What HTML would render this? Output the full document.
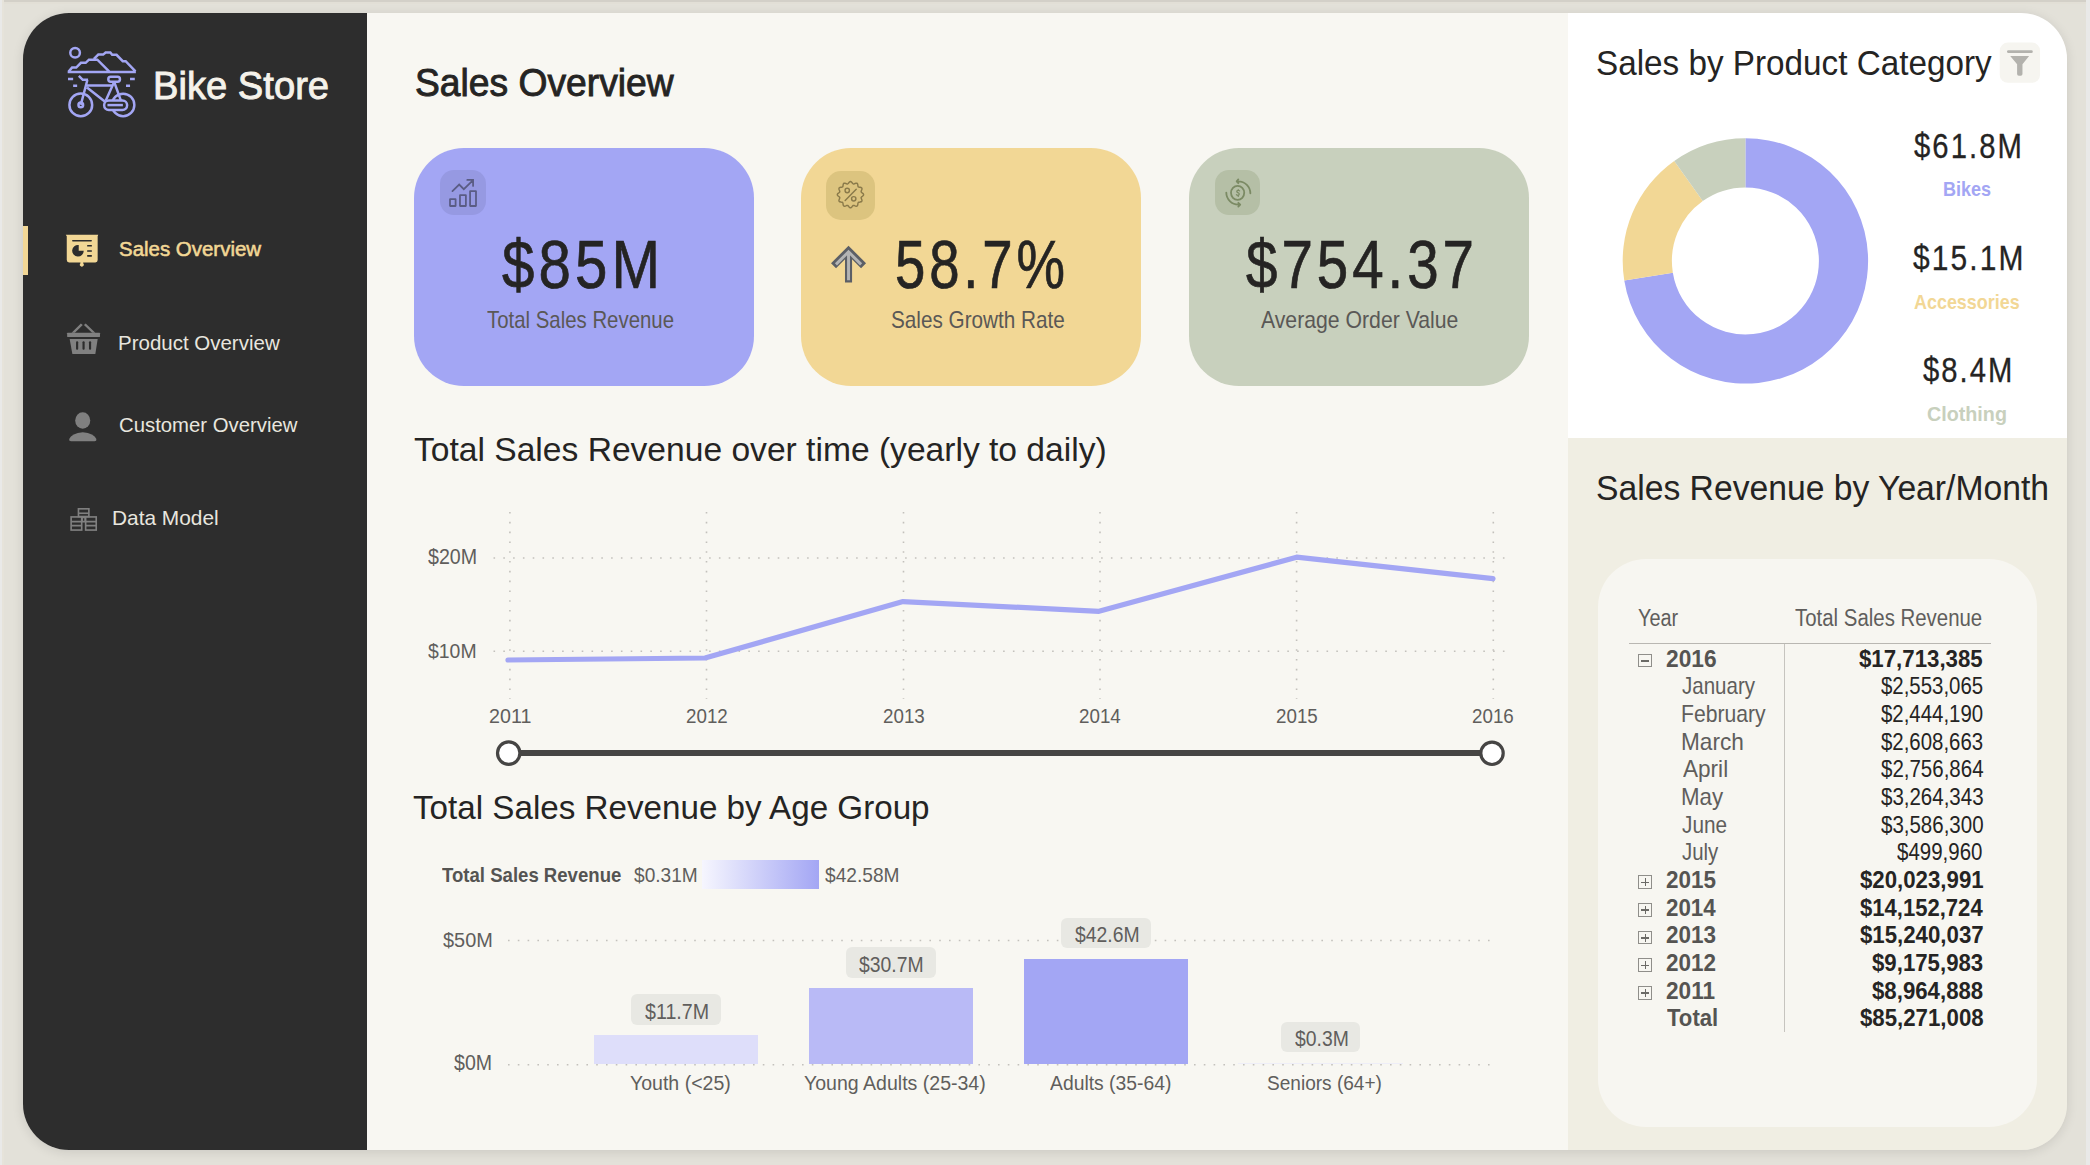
<!DOCTYPE html>
<html><head><meta charset="utf-8">
<style>
html,body{margin:0;padding:0}
body{width:2090px;height:1165px;overflow:hidden;position:relative;background:#e3e1d9;font-family:"Liberation Sans",sans-serif}
.a{position:absolute}
.t{position:absolute;white-space:nowrap;transform-origin:0 0;font-family:"Liberation Sans",sans-serif}
svg{position:absolute;overflow:visible}
</style></head><body>
<div class=a style="left:0;top:0;width:2090px;height:2px;background:#d3d0c8"></div><div class=a style="left:0;top:2px;width:2090px;height:2px;background:#e2dfd6"></div>
<div class=a style="left:0;top:0;width:2px;height:1165px;background:#e9e9e8"></div><div class=a style="left:2px;top:0;width:2px;height:1165px;background:#e6e3da"></div>
<div class=a style="left:2086px;top:0;width:4px;height:1165px;background:#e9e9e8"></div>
<!-- shadow container -->
<div class=a style="left:23px;top:13px;width:2044px;height:1137px;border-radius:46px;box-shadow:0 2px 12px rgba(0,0,0,0.11)"></div>
<!-- sidebar -->
<div class=a style="left:23px;top:13px;width:344px;height:1137px;background:#2d2d2d;border-radius:46px 0 0 46px"></div>
<!-- main -->
<div class=a style="left:367px;top:13px;width:1201px;height:1137px;background:#f8f7f2"></div>
<!-- right -->
<div class=a style="left:1568px;top:13px;width:499px;height:425px;background:#ffffff;border-radius:0 46px 0 0"></div>
<div class=a style="left:1568px;top:438px;width:499px;height:712px;background:#f0eee3;border-radius:0 0 46px 0"></div>
<div class=a style="left:1598px;top:559px;width:439px;height:568px;background:#f7f6f1;border-radius:48px"></div>

<!-- logo -->
<svg style="left:60px;top:40px" width="85" height="85" viewBox="0 0 1165 1165">
<g fill="none" stroke="#a3a6f4" stroke-width="34" stroke-linejoin="miter" stroke-linecap="butt">
<circle cx="207" cy="175" r="66"/>
<path d="M105,440 L1040,440 M118,432 L165,378 L222,378 L287,313 L352,313 L397,270 L512,270 L683,440 M465,258 L525,200 L592,200 L625,172 L690,172 L715,203 L775,203 L860,290 L900,290 L1035,430"/>
<path d="M110,535 L180,535 M180,628 L235,628 M960,535 L1025,535 M905,628 L960,628"/>
<circle cx="285" cy="890" r="156"/>
<circle cx="285" cy="890" r="32"/>
<circle cx="865" cy="890" r="154"/>
<path d="M258,492 L312,545 L385,545 M375,548 L285,890 M370,625 L725,625 M370,650 L618,845 M742,575 L628,830 M748,590 L835,830"/>
<rect x="662" y="505" width="160" height="66" rx="33"/>
<rect x="605" y="828" width="315" height="132" rx="64" fill="#2d2d2d"/>
<path d="M650,892 L862,892"/>
</g></svg>

<!-- nav active bar -->
<div class=a style="left:23px;top:226px;width:5px;height:49px;background:#f2d795"></div>
<!-- presentation icon -->
<svg style="left:60px;top:228px" width="45" height="45" viewBox="0 0 1165 1165">
<path fill="#f2d795" d="M150,175 L990,175 L975,215 L975,830 Q975,890 915,890 L600,890 L600,915 A50,50 0 1 1 530,915 L530,890 L235,890 Q175,890 175,830 L175,215 Z"/>
<g fill="#2d2d2d">
<rect x="312" y="310" width="515" height="42" rx="20"/>
<path d="M485,590 L615,590 A150,150 0 1 1 485,440 Z"/>
<rect x="703" y="438" width="122" height="42" rx="8"/>
<rect x="703" y="573" width="122" height="42" rx="8"/>
<rect x="703" y="700" width="122" height="42" rx="8"/>
</g></svg>
<!-- basket -->
<svg style="left:60px;top:318px" width="45" height="45" viewBox="0 0 1165 1165">
<g fill="#808080">
<path d="M300,385 L540,140 L590,180 L385,385 Z M665,140 L915,385 L830,385 L620,180 Z"/>
<rect x="185" y="385" width="850" height="105" rx="10"/>
<path d="M250,545 L975,545 L915,935 L320,935 Z"/>
</g>
<g fill="#2d2d2d"><rect x="415" y="600" width="56" height="225" rx="26"/><rect x="582" y="600" width="56" height="225" rx="26"/><rect x="750" y="600" width="56" height="225" rx="26"/></g>
</svg>
<!-- person -->
<svg style="left:60px;top:404px" width="45" height="45" viewBox="0 0 1165 1165">
<g fill="#808080">
<ellipse cx="588" cy="428" rx="195" ry="212"/>
<path d="M238,905 Q300,760 590,732 Q880,760 942,905 Q952,962 895,962 L285,962 Q228,962 238,905 Z"/>
</g></svg>
<!-- data model -->
<svg style="left:62px;top:497px" width="45" height="45" viewBox="0 0 1165 1165">
<g fill="none" stroke="#808080" stroke-width="42">
<rect x="426" y="306" width="270" height="200"/>
<path d="M426,421 L696,421"/>
<rect x="236" y="516" width="274" height="340"/>
<rect x="612" y="516" width="274" height="340"/>
<path d="M236,637 L510,637 M236,742 L510,742 M612,637 L886,637 M612,742 L886,742 M510,530 L612,530 M510,636 L612,636 M520,520 L520,640 M600,520 L600,640"/>
</g></svg>

<!-- KPI cards -->
<div class=a style="left:414px;top:148px;width:340px;height:238px;background:#a3a6f4;border-radius:50px"></div>
<div class=a style="left:801px;top:148px;width:340px;height:238px;background:#f2d795;border-radius:50px"></div>
<div class=a style="left:1189px;top:148px;width:340px;height:238px;background:#c8d0bd;border-radius:50px"></div>
<div class=a style="left:440px;top:170px;width:46px;height:45px;background:#9699e2;border-radius:14px"></div>
<div class=a style="left:826px;top:171px;width:49px;height:49px;background:#dcc47f;border-radius:15px"></div>
<div class=a style="left:1215px;top:170px;width:45px;height:45px;background:#b5bfa6;border-radius:14px"></div>
<svg style="left:436px;top:166px" width="54" height="54" viewBox="0 0 1165 1165">
<g fill="none" stroke="#5a5c84" stroke-width="38" stroke-linejoin="miter" stroke-linecap="round">
<rect x="302" y="717" width="121" height="146" rx="3"/>
<rect x="517" y="627" width="128" height="236" rx="3"/>
<rect x="735" y="540" width="128" height="323" rx="3"/>
<path d="M355,540 L500,400 L600,500 L795,310 M675,300 L800,300 L800,430"/>
</g></svg>
<svg style="left:822px;top:168px" width="56" height="56" viewBox="0 0 1165 1165">
<g fill="none" stroke="#8a7a4a" stroke-width="30" stroke-linejoin="round" stroke-linecap="round">
<path id="badge" d="M592.0,281.0 L609.5,288.0 L624.9,305.2 L638.1,323.1 L651.5,332.8 L668.0,331.1 L688.4,322.2 L710.3,315.0 L729.0,317.7 L740.6,332.5 L745.4,355.1 L747.9,377.2 L754.6,392.4 L769.8,399.1 L791.9,401.6 L814.5,406.4 L829.3,418.0 L832.0,436.7 L824.8,458.6 L815.9,479.0 L814.2,495.5 L823.9,508.9 L841.8,522.1 L859.0,537.5 L866.0,555.0 L859.0,572.5 L841.8,587.9 L823.9,601.1 L814.2,614.5 L815.9,631.0 L824.8,651.4 L832.0,673.3 L829.3,692.0 L814.5,703.6 L791.9,708.4 L769.8,710.9 L754.6,717.6 L747.9,732.8 L745.4,754.9 L740.6,777.5 L729.0,792.3 L710.3,795.0 L688.4,787.8 L668.0,778.9 L651.5,777.2 L638.1,786.9 L624.9,804.8 L609.5,822.0 L592.0,829.0 L574.5,822.0 L559.1,804.8 L545.9,786.9 L532.5,777.2 L516.0,778.9 L495.6,787.8 L473.7,795.0 L455.0,792.3 L443.4,777.5 L438.6,754.9 L436.1,732.8 L429.4,717.6 L414.2,710.9 L392.1,708.4 L369.5,703.6 L354.7,692.0 L352.0,673.3 L359.2,651.4 L368.1,631.0 L369.8,614.5 L360.1,601.1 L342.2,587.9 L325.0,572.5 L318.0,555.0 L325.0,537.5 L342.2,522.1 L360.1,508.9 L369.8,495.5 L368.1,479.0 L359.2,458.6 L352.0,436.7 L354.7,418.0 L369.5,406.4 L392.1,401.6 L414.2,399.1 L429.4,392.4 L436.1,377.2 L438.6,355.1 L443.4,332.5 L455.0,317.7 L473.7,315.0 L495.6,322.2 L516.0,331.1 L532.5,332.8 L545.9,323.1 L559.1,305.2 L574.5,288.0 L592.0,281.0 Z"/>
<circle cx="525" cy="468" r="45"/><circle cx="660" cy="640" r="45"/>
<path d="M482,675 L712,440"/>
</g></svg>
<svg style="left:1210px;top:165px" width="55" height="55" viewBox="0 0 1165 1165">
<g fill="none" stroke="#7b8a64" stroke-width="38" stroke-linejoin="round" stroke-linecap="round">
<ellipse cx="585" cy="590" rx="140" ry="150"/>
<path d="M600,345 A255,255 0 0 1 855,600 M600,305 L565,345 L600,385"/>
<path d="M345,585 A255,255 0 0 0 600,840 M600,800 L640,840 L600,880"/>
<path stroke-width="26" d="M628,548 Q600,525 575,545 Q555,570 590,585 Q630,600 615,630 Q590,655 560,630 M598,520 L598,535 M598,650 L598,665"/>
</g></svg>
<!-- arrow -->
<svg style="left:826px;top:240px" width="46" height="50" viewBox="0 0 1072 1165">
<path d="M525,990 L525,250 M175,600 L525,250 L875,600" fill="none" stroke="#5c5f66" stroke-width="165" stroke-linejoin="miter"/>
<path d="M525,935 L525,300 M232,568 L525,275 L818,568" fill="none" stroke="#b4b4b4" stroke-width="68" stroke-linejoin="miter"/>
</svg>

<!-- line chart -->
<svg style="left:0;top:0" width="2090" height="1165">
<g stroke="#c3c1bc" stroke-width="1.6" stroke-dasharray="1.6 8.2" fill="none">
<path d="M493.5,558 L1508,558 M493.5,651.2 L1508,651.2"/>
<path d="M509.9,512 L509.9,699 M706.5,512 L706.5,699 M903.5,512 L903.5,699 M1100,512 L1100,699 M1296.6,512 L1296.6,699 M1493.3,512 L1493.3,699"/>
<path d="M508,940.5 L1496,940.5 M508,1064.8 L1496,1064.8"/>
</g>
<polyline points="508,660 705,658 903,601.6 1099,611.3 1296.6,557.2 1493,578.6" fill="none" stroke="#a3a6f4" stroke-width="5.2" stroke-linejoin="round" stroke-linecap="round"/>
<path d="M508.7,753 L1492,753" stroke="#464544" stroke-width="6"/>
<circle cx="508.7" cy="753.1" r="11.2" fill="#fff" stroke="#464544" stroke-width="3.2"/>
<circle cx="1492" cy="753.3" r="11.2" fill="#fff" stroke="#464544" stroke-width="3.2"/>
<!-- donut -->
<path fill="#a3a6f4" d="M1745.40,138.20 A122.7,122.7 0 1 1 1624.27,280.47 L1672.84,272.63 A73.5,73.5 0 1 0 1745.40,187.40 Z"/><path fill="#f2d795" d="M1624.27,280.47 A122.7,122.7 0 0 1 1674.23,160.95 L1702.77,201.03 A73.5,73.5 0 0 0 1672.84,272.63 Z"/><path fill="#c8d0bd" d="M1674.23,160.95 A122.7,122.7 0 0 1 1745.40,138.20 L1745.40,187.40 A73.5,73.5 0 0 0 1702.77,201.03 Z"/>
</svg>

<!-- age bars -->
<div class=a style="left:702px;top:860px;width:117px;height:29px;background:linear-gradient(90deg,#f6f6fe,#a3a6f4)"></div>
<div class=a style="left:594px;top:1035px;width:164px;height:29px;background:#dedefa"></div>
<div class=a style="left:809px;top:988px;width:164px;height:76px;background:#b9baf6"></div>
<div class=a style="left:1024px;top:958.5px;width:164px;height:105.5px;background:#a3a6f4"></div>
<div class=a style="left:1238px;top:1063px;width:165px;height:1px;background:#eeeef8"></div>
<div class=a style="left:631px;top:994px;width:90px;height:30.5px;background:#e8e8e3;border-radius:6px"></div>
<div class=a style="left:846px;top:947.2px;width:90px;height:30.6px;background:#e8e8e3;border-radius:6px"></div>
<div class=a style="left:1061px;top:917.5px;width:90px;height:30.8px;background:#e8e8e3;border-radius:6px"></div>
<div class=a style="left:1281.3px;top:1021.5px;width:79px;height:30.8px;background:#e8e8e3;border-radius:6px"></div>

<!-- filter icon -->
<svg style="left:1995px;top:38px" width="50" height="50" viewBox="0 0 1165 1165">
<rect x="110" y="105" width="940" height="940" rx="190" fill="#f6f5f0"/>
<g fill="#b3b2ad"><rect x="280" y="285" width="600" height="65" rx="32"/>
<path d="M355,420 L795,420 L640,610 L640,840 Q640,880 600,880 L555,880 Q515,880 515,840 L515,610 Z"/></g>
</svg>

<!-- table -->
<div class=a style="left:1629px;top:643px;width:362px;height:1.3px;background:#b9b7b2"></div>
<div class=a style="left:1784px;top:644px;width:1px;height:388px;background:#c6c4bf"></div>
<div class=a style="left:1638.3px;top:653.6px;width:11.8px;height:11.8px;border:1.6px solid #8f8e8a"></div><div class=a style="left:1641.2px;top:660.10px;width:8px;height:1.6px;background:#6b6a66"></div><div class=a style="left:1638.3px;top:875.12px;width:11.8px;height:11.8px;border:1.6px solid #8f8e8a"></div><div class=a style="left:1641.2px;top:881.62px;width:8px;height:1.6px;background:#6b6a66"></div><div class=a style="left:1644.5px;top:878.12px;width:1.6px;height:8px;background:#6b6a66"></div><div class=a style="left:1638.3px;top:902.8100000000001px;width:11.8px;height:11.8px;border:1.6px solid #8f8e8a"></div><div class=a style="left:1641.2px;top:909.31px;width:8px;height:1.6px;background:#6b6a66"></div><div class=a style="left:1644.5px;top:905.81px;width:1.6px;height:8px;background:#6b6a66"></div><div class=a style="left:1638.3px;top:930.5000000000001px;width:11.8px;height:11.8px;border:1.6px solid #8f8e8a"></div><div class=a style="left:1641.2px;top:937.00px;width:8px;height:1.6px;background:#6b6a66"></div><div class=a style="left:1644.5px;top:933.50px;width:1.6px;height:8px;background:#6b6a66"></div><div class=a style="left:1638.3px;top:958.19px;width:11.8px;height:11.8px;border:1.6px solid #8f8e8a"></div><div class=a style="left:1641.2px;top:964.69px;width:8px;height:1.6px;background:#6b6a66"></div><div class=a style="left:1644.5px;top:961.19px;width:1.6px;height:8px;background:#6b6a66"></div><div class=a style="left:1638.3px;top:985.88px;width:11.8px;height:11.8px;border:1.6px solid #8f8e8a"></div><div class=a style="left:1641.2px;top:992.38px;width:8px;height:1.6px;background:#6b6a66"></div><div class=a style="left:1644.5px;top:988.88px;width:1.6px;height:8px;background:#6b6a66"></div>

<div class=t style="left:153.05px;top:67px;font-size:38.84px;line-height:38.84px;font-weight:400;color:#f5f2ea;letter-spacing:0.000px;-webkit-text-stroke:0.90px #f5f2ea;transform:scaleX(0.9829)">Bike Store</div>
<div class=t style="left:118.88px;top:239px;font-size:20.00px;line-height:20.00px;font-weight:400;color:#f2d795;letter-spacing:0.000px;-webkit-text-stroke:0.55px #f2d795;transform:scaleX(1.0225)">Sales Overview</div>
<div class=t style="left:118.34px;top:333px;font-size:20.87px;line-height:20.87px;font-weight:400;color:#e8e6df;letter-spacing:0.000px;transform:scaleX(0.9822)">Product Overview</div>
<div class=t style="left:119.29px;top:415px;font-size:20.14px;line-height:20.14px;font-weight:400;color:#e8e6df;letter-spacing:0.000px;transform:scaleX(1.0097)">Customer Overview</div>
<div class=t style="left:111.71px;top:507px;font-size:21.01px;line-height:21.01px;font-weight:400;color:#e8e6df;letter-spacing:0.000px;transform:scaleX(0.9933)">Data Model</div>
<div class=t style="left:414.52px;top:65px;font-size:37.97px;line-height:37.97px;font-weight:400;color:#252423;letter-spacing:0.000px;-webkit-text-stroke:0.90px #252423;transform:scaleX(0.9806)">Sales Overview</div>
<div class=t style="left:502.10px;top:230px;font-size:68.12px;line-height:68.12px;font-weight:400;color:#252423;letter-spacing:4.768px;-webkit-text-stroke:0.70px #252423;transform:scaleX(0.8550)">$85M</div>
<div class=t style="left:486.60px;top:309px;font-size:23.19px;line-height:23.19px;font-weight:400;color:#5a5856;letter-spacing:0.000px;transform:scaleX(0.8792)">Total Sales Revenue</div>
<div class=t style="left:895.10px;top:230px;font-size:68.12px;line-height:68.12px;font-weight:400;color:#252423;letter-spacing:4.768px;-webkit-text-stroke:0.70px #252423;transform:scaleX(0.8010)">58.7%</div>
<div class=t style="left:891.11px;top:309px;font-size:23.19px;line-height:23.19px;font-weight:400;color:#5a5856;letter-spacing:0.000px;transform:scaleX(0.8933)">Sales Growth Rate</div>
<div class=t style="left:1246.30px;top:230px;font-size:68.12px;line-height:68.12px;font-weight:400;color:#252423;letter-spacing:4.768px;-webkit-text-stroke:0.70px #252423;transform:scaleX(0.8298)">$754.37</div>
<div class=t style="left:1260.80px;top:309px;font-size:23.19px;line-height:23.19px;font-weight:400;color:#5a5856;letter-spacing:0.000px;transform:scaleX(0.9149)">Average Order Value</div>
<div class=t style="left:413.81px;top:433px;font-size:33.77px;line-height:33.77px;font-weight:400;color:#252423;letter-spacing:0.000px;transform:scaleX(0.9948)">Total Sales Revenue over time (yearly to daily)</div>
<div class=t style="left:428.40px;top:546px;font-size:21.16px;line-height:21.16px;font-weight:400;color:#605e5c;letter-spacing:0.000px;transform:scaleX(0.9275)">$20M</div>
<div class=t style="left:428.40px;top:641px;font-size:20.14px;line-height:20.14px;font-weight:400;color:#605e5c;letter-spacing:0.000px;transform:scaleX(0.9653)">$10M</div>
<div class=t style="left:488.67px;top:706px;font-size:20.14px;line-height:20.14px;font-weight:400;color:#605e5c;letter-spacing:0.000px;transform:scaleX(0.9780)">2011</div>
<div class=t style="left:685.52px;top:706px;font-size:20.14px;line-height:20.14px;font-weight:400;color:#605e5c;letter-spacing:0.000px;transform:scaleX(0.9326)">2012</div>
<div class=t style="left:882.52px;top:706px;font-size:20.14px;line-height:20.14px;font-weight:400;color:#605e5c;letter-spacing:0.000px;transform:scaleX(0.9326)">2013</div>
<div class=t style="left:1079.02px;top:706px;font-size:20.14px;line-height:20.14px;font-weight:400;color:#605e5c;letter-spacing:0.000px;transform:scaleX(0.9326)">2014</div>
<div class=t style="left:1275.62px;top:706px;font-size:20.14px;line-height:20.14px;font-weight:400;color:#605e5c;letter-spacing:0.000px;transform:scaleX(0.9326)">2015</div>
<div class=t style="left:1472.32px;top:706px;font-size:20.14px;line-height:20.14px;font-weight:400;color:#605e5c;letter-spacing:0.000px;transform:scaleX(0.9326)">2016</div>
<div class=t style="left:413.00px;top:791px;font-size:33.04px;line-height:33.04px;font-weight:400;color:#252423;letter-spacing:0.000px;transform:scaleX(1.0047)">Total Sales Revenue by Age Group</div>
<div class=t style="left:442.30px;top:864px;font-size:21.01px;line-height:21.01px;font-weight:700;color:#555452;letter-spacing:0.000px;transform:scaleX(0.8847)">Total Sales Revenue</div>
<div class=t style="left:634.30px;top:864px;font-size:21.01px;line-height:21.01px;font-weight:400;color:#605e5c;letter-spacing:0.000px;transform:scaleX(0.9103)">$0.31M</div>
<div class=t style="left:824.60px;top:864px;font-size:21.01px;line-height:21.01px;font-weight:400;color:#605e5c;letter-spacing:0.000px;transform:scaleX(0.9112)">$42.58M</div>
<div class=t style="left:443.20px;top:930px;font-size:20.00px;line-height:20.00px;font-weight:400;color:#605e5c;letter-spacing:0.000px;transform:scaleX(0.9958)">$50M</div>
<div class=t style="left:454.00px;top:1052px;font-size:21.16px;line-height:21.16px;font-weight:400;color:#605e5c;letter-spacing:0.000px;transform:scaleX(0.9250)">$0M</div>
<div class=t style="left:645.00px;top:1001px;font-size:21.59px;line-height:21.59px;font-weight:400;color:#605e5c;letter-spacing:0.000px;transform:scaleX(0.9101)">$11.7M</div>
<div class=t style="left:859.40px;top:954px;font-size:21.59px;line-height:21.59px;font-weight:400;color:#605e5c;letter-spacing:0.000px;transform:scaleX(0.8971)">$30.7M</div>
<div class=t style="left:1074.55px;top:924px;font-size:21.59px;line-height:21.59px;font-weight:400;color:#605e5c;letter-spacing:0.000px;transform:scaleX(0.8971)">$42.6M</div>
<div class=t style="left:1294.85px;top:1028px;font-size:21.59px;line-height:21.59px;font-weight:400;color:#605e5c;letter-spacing:0.000px;transform:scaleX(0.8966)">$0.3M</div>
<div class=t style="left:629.56px;top:1073px;font-size:20.87px;line-height:20.87px;font-weight:400;color:#605e5c;letter-spacing:0.000px;transform:scaleX(0.9358)">Youth (&lt;25)</div>
<div class=t style="left:803.76px;top:1073px;font-size:20.87px;line-height:20.87px;font-weight:400;color:#605e5c;letter-spacing:0.000px;transform:scaleX(0.9365)">Young Adults (25-34)</div>
<div class=t style="left:1049.60px;top:1073px;font-size:20.87px;line-height:20.87px;font-weight:400;color:#605e5c;letter-spacing:0.000px;transform:scaleX(0.9262)">Adults (35-64)</div>
<div class=t style="left:1267.09px;top:1073px;font-size:20.87px;line-height:20.87px;font-weight:400;color:#605e5c;letter-spacing:0.000px;transform:scaleX(0.9137)">Seniors (64+)</div>
<div class=t style="left:1596.06px;top:46px;font-size:34.35px;line-height:34.35px;font-weight:400;color:#252423;letter-spacing:0.000px;transform:scaleX(0.9690)">Sales by Product Category</div>
<div class=t style="left:1913.70px;top:129px;font-size:35.80px;line-height:35.80px;font-weight:400;color:#252423;letter-spacing:2.506px;-webkit-text-stroke:0.30px #252423;transform:scaleX(0.8178)">$61.8M</div>
<div class=t style="left:1943.38px;top:180px;font-size:19.71px;line-height:19.71px;font-weight:700;color:#a3a6f4;letter-spacing:0.000px;transform:scaleX(0.9157)">Bikes</div>
<div class=t style="left:1912.50px;top:241px;font-size:35.80px;line-height:35.80px;font-weight:400;color:#252423;letter-spacing:2.506px;-webkit-text-stroke:0.30px #252423;transform:scaleX(0.8372)">$15.1M</div>
<div class=t style="left:1913.78px;top:293px;font-size:19.42px;line-height:19.42px;font-weight:700;color:#f2d795;letter-spacing:0.000px;transform:scaleX(0.9239)">Accessories</div>
<div class=t style="left:1923.40px;top:352px;font-size:35.94px;line-height:35.94px;font-weight:400;color:#252423;letter-spacing:2.516px;-webkit-text-stroke:0.30px #252423;transform:scaleX(0.8131)">$8.4M</div>
<div class=t style="left:1927.14px;top:404px;font-size:20.58px;line-height:20.58px;font-weight:700;color:#c8d0bd;letter-spacing:0.000px;transform:scaleX(0.9580)">Clothing</div>
<div class=t style="left:1596.23px;top:471px;font-size:34.20px;line-height:34.20px;font-weight:400;color:#252423;letter-spacing:0.000px;transform:scaleX(0.9849)">Sales Revenue by Year/Month</div>
<div class=t style="left:1637.67px;top:606px;font-size:23.91px;line-height:23.91px;font-weight:400;color:#605e5c;letter-spacing:0.000px;transform:scaleX(0.8319)">Year</div>
<div class=t style="left:1794.60px;top:606px;font-size:23.91px;line-height:23.91px;font-weight:400;color:#605e5c;letter-spacing:0.000px;transform:scaleX(0.8537)">Total Sales Revenue</div>
<div class=t style="left:1665.82px;top:648px;font-size:23.19px;line-height:23.19px;font-weight:700;color:#555452;letter-spacing:0.000px;transform:scaleX(0.9800)">2016</div>
<div class=t style="left:1859.40px;top:648px;font-size:23.19px;line-height:23.19px;font-weight:700;color:#252423;letter-spacing:0.000px;transform:scaleX(0.9594)">$17,713,385</div>
<div class=t style="left:1682.31px;top:675px;font-size:23.19px;line-height:23.19px;font-weight:400;color:#605e5c;letter-spacing:0.000px;transform:scaleX(0.8852)">January</div>
<div class=t style="left:1881.00px;top:675px;font-size:23.19px;line-height:23.19px;font-weight:400;color:#252423;letter-spacing:0.000px;transform:scaleX(0.8800)">$2,553,065</div>
<div class=t style="left:1681.38px;top:703px;font-size:23.19px;line-height:23.19px;font-weight:400;color:#605e5c;letter-spacing:0.000px;transform:scaleX(0.9121)">February</div>
<div class=t style="left:1881.00px;top:703px;font-size:23.19px;line-height:23.19px;font-weight:400;color:#252423;letter-spacing:0.000px;transform:scaleX(0.8800)">$2,444,190</div>
<div class=t style="left:1681.25px;top:731px;font-size:23.19px;line-height:23.19px;font-weight:400;color:#605e5c;letter-spacing:0.000px;transform:scaleX(0.9754)">March</div>
<div class=t style="left:1881.00px;top:731px;font-size:23.19px;line-height:23.19px;font-weight:400;color:#252423;letter-spacing:0.000px;transform:scaleX(0.8800)">$2,608,663</div>
<div class=t style="left:1683.20px;top:758px;font-size:23.19px;line-height:23.19px;font-weight:400;color:#605e5c;letter-spacing:0.000px;transform:scaleX(0.9733)">April</div>
<div class=t style="left:1880.60px;top:758px;font-size:23.19px;line-height:23.19px;font-weight:400;color:#252423;letter-spacing:0.000px;transform:scaleX(0.8835)">$2,756,864</div>
<div class=t style="left:1681.28px;top:786px;font-size:23.19px;line-height:23.19px;font-weight:400;color:#605e5c;letter-spacing:0.000px;transform:scaleX(0.9619)">May</div>
<div class=t style="left:1880.60px;top:786px;font-size:23.19px;line-height:23.19px;font-weight:400;color:#252423;letter-spacing:0.000px;transform:scaleX(0.8835)">$3,264,343</div>
<div class=t style="left:1682.30px;top:814px;font-size:23.19px;line-height:23.19px;font-weight:400;color:#605e5c;letter-spacing:0.000px;transform:scaleX(0.8958)">June</div>
<div class=t style="left:1880.60px;top:814px;font-size:23.19px;line-height:23.19px;font-weight:400;color:#252423;letter-spacing:0.000px;transform:scaleX(0.8835)">$3,586,300</div>
<div class=t style="left:1682.32px;top:841px;font-size:23.19px;line-height:23.19px;font-weight:400;color:#605e5c;letter-spacing:0.000px;transform:scaleX(0.8800)">July</div>
<div class=t style="left:1897.40px;top:841px;font-size:23.19px;line-height:23.19px;font-weight:400;color:#252423;letter-spacing:0.000px;transform:scaleX(0.8833)">$499,960</div>
<div class=t style="left:1665.83px;top:869px;font-size:23.19px;line-height:23.19px;font-weight:700;color:#555452;letter-spacing:0.000px;transform:scaleX(0.9700)">2015</div>
<div class=t style="left:1859.50px;top:869px;font-size:23.19px;line-height:23.19px;font-weight:700;color:#252423;letter-spacing:0.000px;transform:scaleX(0.9586)">$20,023,991</div>
<div class=t style="left:1665.84px;top:897px;font-size:23.19px;line-height:23.19px;font-weight:700;color:#555452;letter-spacing:0.000px;transform:scaleX(0.9627)">2014</div>
<div class=t style="left:1859.50px;top:897px;font-size:23.19px;line-height:23.19px;font-weight:700;color:#252423;letter-spacing:0.000px;transform:scaleX(0.9512)">$14,152,724</div>
<div class=t style="left:1665.83px;top:924px;font-size:23.19px;line-height:23.19px;font-weight:700;color:#555452;letter-spacing:0.000px;transform:scaleX(0.9700)">2013</div>
<div class=t style="left:1859.50px;top:924px;font-size:23.19px;line-height:23.19px;font-weight:700;color:#252423;letter-spacing:0.000px;transform:scaleX(0.9586)">$15,240,037</div>
<div class=t style="left:1665.83px;top:952px;font-size:23.19px;line-height:23.19px;font-weight:700;color:#555452;letter-spacing:0.000px;transform:scaleX(0.9700)">2012</div>
<div class=t style="left:1872.00px;top:952px;font-size:23.19px;line-height:23.19px;font-weight:700;color:#252423;letter-spacing:0.000px;transform:scaleX(0.9583)">$9,175,983</div>
<div class=t style="left:1665.82px;top:980px;font-size:23.19px;line-height:23.19px;font-weight:700;color:#555452;letter-spacing:0.000px;transform:scaleX(0.9755)">2011</div>
<div class=t style="left:1872.00px;top:980px;font-size:23.19px;line-height:23.19px;font-weight:700;color:#252423;letter-spacing:0.000px;transform:scaleX(0.9583)">$8,964,888</div>
<div class=t style="left:1666.80px;top:1007px;font-size:23.19px;line-height:23.19px;font-weight:700;color:#555452;letter-spacing:0.000px;transform:scaleX(0.9538)">Total</div>
<div class=t style="left:1859.50px;top:1007px;font-size:23.19px;line-height:23.19px;font-weight:700;color:#252423;letter-spacing:0.000px;transform:scaleX(0.9586)">$85,271,008</div>
</body></html>
